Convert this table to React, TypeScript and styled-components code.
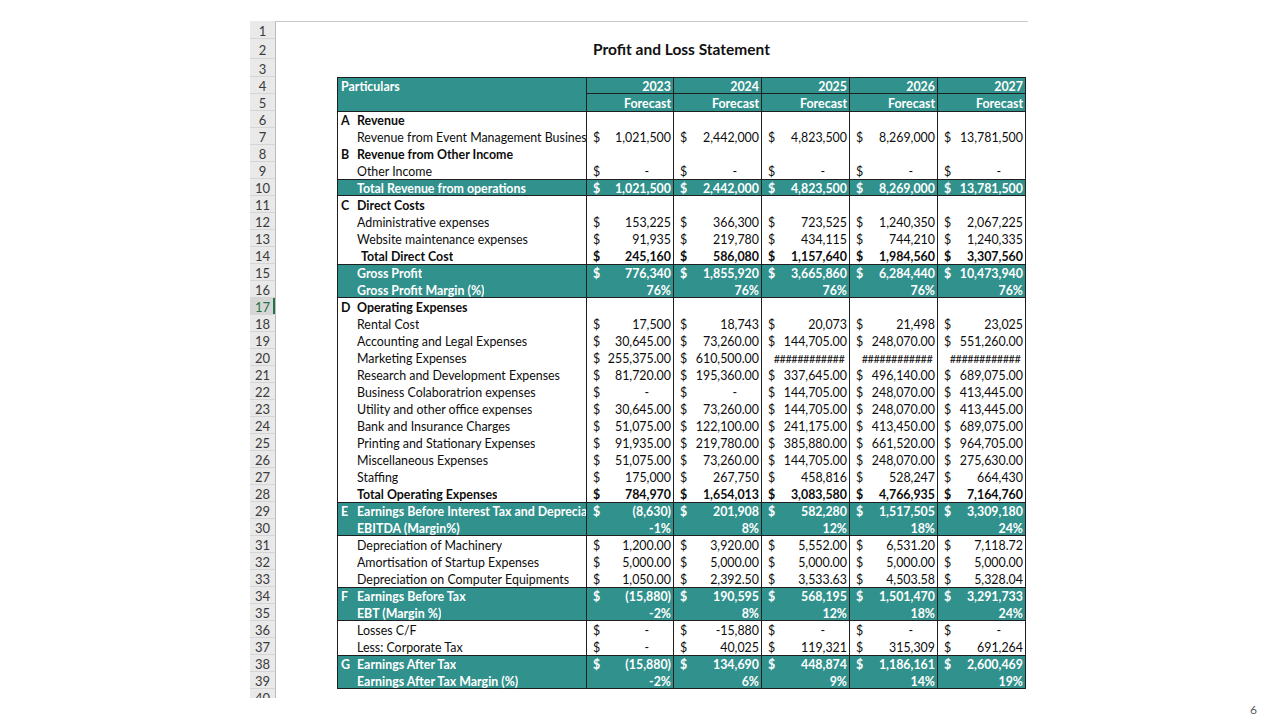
import React from "react";
import styled, { createGlobalStyle, css } from "styled-components";

const GlobalStyle = createGlobalStyle`
  html, body { margin: 0; padding: 0; background: #ffffff; }
  body {
    width: 1280px;
    height: 720px;
    overflow: hidden;
    font-family: Lato, "Open Sans", "Liberation Sans", sans-serif;
  }
`;

const TEAL = "#31918c";
const LINE = "#1f1f1f";

const Page = styled.div`
  width: 1280px;
  height: 720px;
  display: flex;
  flex-direction: column;
`;

const Sheet = styled.div`
  margin: 21px 0 0 250px;
  width: 778px;
  height: 677px;
  display: flex;
  overflow: hidden;
  flex: none;
`;

const RowHeaders = styled.div`
  width: 26px;
  flex: none;
  display: flex;
  flex-direction: column;
  background: #e9e9e9;
  border-right: 1px solid #bdbdbd;
  box-sizing: border-box;
`;

const RowNum = styled.div<{ $h: number; $active?: boolean }>`
  height: ${(p) => p.$h}px;
  flex: none;
  box-sizing: border-box;
  border-bottom: 1px solid #d5d5d5;
  font-family: Lato, "Open Sans", sans-serif;
  font-size: 13px;
  color: #3a3a3a;
  display: flex;
  align-items: center;
  justify-content: center;
  padding-top: 2px;
  ${(p) =>
    p.$active &&
    css`
      background: #d6d6d6;
      color: #217346;
      box-shadow: inset -2px 0 0 #217346;
    `}
`;

const Content = styled.div`
  width: 752px;
  flex: none;
  display: flex;
  flex-direction: column;
  border-top: 1px solid #c8c8c8;
`;

const BlankRow = styled.div<{ $h: number }>`
  height: ${(p) => p.$h}px;
  flex: none;
`;

const TitleRow = styled.div`
  height: 20px;
  flex: none;
  margin-left: 61px;
  width: 689px;
  display: flex;
  align-items: flex-end;
  justify-content: center;
`;

const Title = styled.span`
  font-family: Lato, "Open Sans", sans-serif;
  font-weight: 700;
  font-size: 15.5px;
  line-height: 19px;
  color: #111;
`;

const Table = styled.div`
  margin-left: 61px;
  width: 689px;
  border-left: 1px solid ${LINE};
  box-sizing: border-box;
  display: flex;
  flex-direction: column;
  flex: none;
`;

const Row = styled.div<{ $teal?: boolean; $bold?: boolean; $bt?: boolean; $bb?: boolean }>`
  display: grid;
  grid-template-columns: 249px 87px 88px 88px 88px 88px;
  height: 17px;
  flex: none;
  font-size: 12.4px;
  line-height: 17px;
  color: ${(p) => (p.$teal ? "#ffffff" : "#0d0d0d")};
  font-weight: ${(p) => (p.$bold || p.$teal ? 700 : 400)};
  background: ${(p) => (p.$teal ? TEAL : "#ffffff")};
  box-shadow: ${(p) =>
    [p.$bt ? `inset 0 1px 0 ${LINE}` : "", p.$bb ? `inset 0 -1px 0 ${LINE}` : ""]
      .filter(Boolean)
      .join(", ") || "none"};
`;

const LabelCell = styled.div<{ $indent?: number }>`
  border-right: 1px solid ${LINE};
  box-sizing: border-box;
  display: flex;
  white-space: nowrap;
  overflow: hidden;
  padding-top: 1px;
  padding-left: ${(p) => p.$indent ?? 0}px;
`;

const Letter = styled.span`
  width: 19px;
  padding-left: 3px;
  box-sizing: border-box;
  flex: none;
`;

const LabelText = styled.span`
  overflow: hidden;
  min-width: 0;
`;

const HeaderLabel = styled.span`
  padding-left: 3px;
`;

const ValueCell = styled.div<{ $align?: "split" | "right" | "center"; $underline?: boolean }>`
  border-right: 1px solid ${LINE};
  box-sizing: border-box;
  display: flex;
  justify-content: ${(p) =>
    p.$align === "right" ? "flex-end" : p.$align === "center" ? "center" : "space-between"};
  padding: 1px 2px 0 6px;
  white-space: nowrap;
  overflow: hidden;
  ${(p) =>
    p.$underline &&
    css`
      box-shadow: inset 0 -1px 0 ${LINE};
    `}
`;

const Dash = styled.span`
  padding-right: 22px;
`;

const Hashes = styled.span`
  letter-spacing: -0.5px;
  font-size: 11px;
  padding-left: 3px;
`;

const Footer = styled.div`
  flex: 1;
  display: flex;
  justify-content: flex-end;
  align-items: center;
  padding-right: 23px;
  font-family: Lato, "Open Sans", sans-serif;
  font-size: 12px;
  color: #595959;
`;

type RowDef = {
  letter?: string;
  label: string;
  vals?: string[];
  teal?: boolean;
  bold?: boolean;
  indent?: boolean;
  bt?: boolean;
  bb?: boolean;
};

const d5 = (v: string) => [v, v, v, v, v];

const rows: RowDef[] = [
  { letter: "A", label: "Revenue", bold: true, bt: true },
  {
    label: "Revenue from Event Management Business",
    vals: ["$1,021,500", "$2,442,000", "$4,823,500", "$8,269,000", "$13,781,500"],
  },
  { letter: "B", label: "Revenue from Other Income", bold: true },
  { label: "Other Income", vals: d5("$-") },
  {
    label: "Total Revenue from operations",
    teal: true,
    bt: true,
    bb: true,
    vals: ["$1,021,500", "$2,442,000", "$4,823,500", "$8,269,000", "$13,781,500"],
  },
  { letter: "C", label: "Direct Costs", bold: true },
  {
    label: "Administrative expenses",
    vals: ["$153,225", "$366,300", "$723,525", "$1,240,350", "$2,067,225"],
  },
  {
    label: "Website maintenance expenses",
    vals: ["$91,935", "$219,780", "$434,115", "$744,210", "$1,240,335"],
  },
  {
    label: "Total Direct Cost",
    bold: true,
    indent: true,
    vals: ["$245,160", "$586,080", "$1,157,640", "$1,984,560", "$3,307,560"],
  },
  {
    label: "Gross Profit",
    teal: true,
    bt: true,
    vals: ["$776,340", "$1,855,920", "$3,665,860", "$6,284,440", "$10,473,940"],
  },
  { label: "Gross Profit Margin (%)", teal: true, bb: true, vals: d5("76%") },
  { letter: "D", label: "Operating Expenses", bold: true },
  { label: "Rental Cost", vals: ["$17,500", "$18,743", "$20,073", "$21,498", "$23,025"] },
  {
    label: "Accounting and Legal Expenses",
    vals: ["$30,645.00", "$73,260.00", "$144,705.00", "$248,070.00", "$551,260.00"],
  },
  { label: "Marketing Expenses", vals: ["$255,375.00", "$610,500.00", "#", "#", "#"] },
  {
    label: "Research and Development Expenses",
    vals: ["$81,720.00", "$195,360.00", "$337,645.00", "$496,140.00", "$689,075.00"],
  },
  {
    label: "Business Colaboratrion expenses",
    vals: ["$-", "$-", "$144,705.00", "$248,070.00", "$413,445.00"],
  },
  {
    label: "Utility and other office expenses",
    vals: ["$30,645.00", "$73,260.00", "$144,705.00", "$248,070.00", "$413,445.00"],
  },
  {
    label: "Bank and Insurance Charges",
    vals: ["$51,075.00", "$122,100.00", "$241,175.00", "$413,450.00", "$689,075.00"],
  },
  {
    label: "Printing and Stationary Expenses",
    vals: ["$91,935.00", "$219,780.00", "$385,880.00", "$661,520.00", "$964,705.00"],
  },
  {
    label: "Miscellaneous Expenses",
    vals: ["$51,075.00", "$73,260.00", "$144,705.00", "$248,070.00", "$275,630.00"],
  },
  { label: "Staffing", vals: ["$175,000", "$267,750", "$458,816", "$528,247", "$664,430"] },
  {
    label: "Total Operating Expenses",
    bold: true,
    vals: ["$784,970", "$1,654,013", "$3,083,580", "$4,766,935", "$7,164,760"],
  },
  {
    letter: "E",
    label: "Earnings Before Interest Tax and Deprecia",
    teal: true,
    bt: true,
    vals: ["$(8,630)", "$201,908", "$582,280", "$1,517,505", "$3,309,180"],
  },
  { label: "EBITDA (Margin%)", teal: true, bb: true, vals: ["-1%", "8%", "12%", "18%", "24%"] },
  {
    label: "Depreciation of Machinery",
    vals: ["$1,200.00", "$3,920.00", "$5,552.00", "$6,531.20", "$7,118.72"],
  },
  { label: "Amortisation of Startup Expenses", vals: d5("$5,000.00") },
  {
    label: "Depreciation on Computer Equipments",
    vals: ["$1,050.00", "$2,392.50", "$3,533.63", "$4,503.58", "$5,328.04"],
  },
  {
    letter: "F",
    label: "Earnings Before Tax",
    teal: true,
    bt: true,
    vals: ["$(15,880)", "$190,595", "$568,195", "$1,501,470", "$3,291,733"],
  },
  { label: "EBT (Margin %)", teal: true, bb: true, vals: ["-2%", "8%", "12%", "18%", "24%"] },
  { label: "Losses C/F", vals: ["$-", "$-15,880", "$-", "$-", "$-"] },
  { label: "Less: Corporate Tax", vals: ["$-", "$40,025", "$119,321", "$315,309", "$691,264"] },
  {
    letter: "G",
    label: "Earnings After Tax",
    teal: true,
    bt: true,
    vals: ["$(15,880)", "$134,690", "$448,874", "$1,186,161", "$2,600,469"],
  },
  {
    label: "Earnings After Tax Margin (%)",
    teal: true,
    bb: true,
    vals: ["-2%", "6%", "9%", "14%", "19%"],
  },
];

const years = ["2023", "2024", "2025", "2026", "2027"];

const Value: React.FC<{ v: string }> = ({ v }) => {
  if (v === "#") {
    return (
      <ValueCell $align="center">
        <Hashes>{"#".repeat(12)}</Hashes>
      </ValueCell>
    );
  }
  if (v.startsWith("$")) {
    const num = v.slice(1);
    return (
      <ValueCell $align="split">
        <span>$</span>
        {num === "-" ? <Dash>-</Dash> : <span>{num}</span>}
      </ValueCell>
    );
  }
  return (
    <ValueCell $align="right">
      <span>{v}</span>
    </ValueCell>
  );
};

const rowHeights: number[] = [18, 20, 18, ...Array(37).fill(17)];

export default function App() {
  return (
    <Page>
      <GlobalStyle />
      <Sheet>
        <RowHeaders>
          {rowHeights.map((h, i) => (
            <RowNum key={i} $h={h} $active={i + 1 === 17}>
              {i + 1}
            </RowNum>
          ))}
        </RowHeaders>
        <Content>
          <BlankRow $h={17} />
          <TitleRow>
            <Title>Profit and Loss Statement</Title>
          </TitleRow>
          <BlankRow $h={18} />
          <Table>
            <Row $teal $bt>
              <LabelCell>
                <HeaderLabel>Particulars</HeaderLabel>
              </LabelCell>
              {years.map((y) => (
                <ValueCell key={y} $align="right" $underline>
                  {y}
                </ValueCell>
              ))}
            </Row>
            <Row $teal>
              <LabelCell />
              {years.map((y) => (
                <ValueCell key={y} $align="right">
                  Forecast
                </ValueCell>
              ))}
            </Row>
            {rows.map((r, i) => (
              <Row key={i} $teal={r.teal} $bold={r.bold} $bt={r.bt} $bb={r.bb}>
                <LabelCell $indent={r.letter ? 0 : r.indent ? 23 : 19}>
                  {r.letter && <Letter>{r.letter}</Letter>}
                  <LabelText>{r.label}</LabelText>
                </LabelCell>
                {(r.vals ?? ["", "", "", "", ""]).map((v, j) =>
                  v === "" ? <ValueCell key={j} /> : <Value key={j} v={v} />
                )}
              </Row>
            ))}
          </Table>
        </Content>
      </Sheet>
      <Footer>6</Footer>
    </Page>
  );
}
